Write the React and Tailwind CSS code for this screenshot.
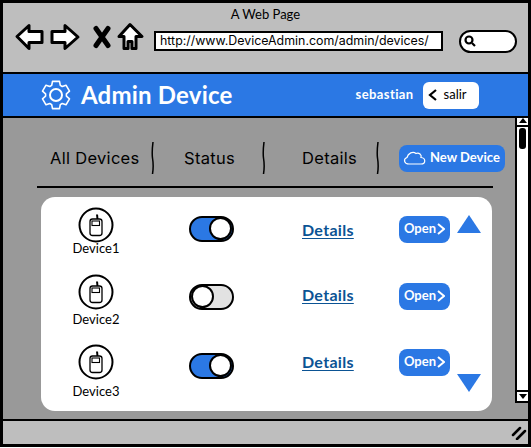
import React from "react";

const gearPath = (() => {
  const cx = 15, cy = 15, teeth = 6;
  let d = "";
  for (let i = 0; i < teeth; i++) {
    const a = (i * Math.PI * 2) / teeth - Math.PI / 2;
    const pts = [
      [10.5, -0.42],
      [14, -0.25],
      [14, 0.25],
      [10.5, 0.42],
    ];
    pts.forEach(([r, o]) => {
      const x = cx + r * Math.cos(a + o);
      const y = cy + r * Math.sin(a + o);
      d += (d ? "L" : "M") + x.toFixed(1) + " " + y.toFixed(1);
    });
  }
  return d + "Z";
})();

const Gear = () => (
  <svg width="30" height="30" viewBox="0 0 30 30" fill="none" stroke="white" strokeWidth="1.6" strokeLinejoin="round">
    <path d={gearPath} />
    <circle cx="15" cy="15" r="6" strokeWidth="2" />
  </svg>
);

const NavIcons = () => (
  <svg width="130" height="30" viewBox="0 3.500 130 30" fill="white" stroke="black" strokeWidth="3" strokeLinejoin="round" className="shrink-0 overflow-visible">
    <path d="M2 14 L14 3 L14 9 L27 9 L27 20 L14 20 L14 26 Z" />
    <path d="M37 9 L50 9 L50 3 L63 14.500 L50 26 L50 20 L37 20 Z" />
    <path d="M81 6 L93 23 M93 6 L81 23" strokeWidth="5" strokeLinecap="round" />
    <path d="M104 14 L115 2 L127 14 L121 14 L121 26 L117 26 L117 19 L113 19 L113 26 L109 26 L109 14 Z" />
  </svg>
);

const Phone = () => (
  <svg width="36" height="36" viewBox="0 0 36 36" fill="none" stroke="black" className="block">
    <circle cx="18" cy="18" r="16.500" strokeWidth="2" fill="white" />
    <path d="M19.500 12 L19 7.500" strokeWidth="2" />
    <rect x="12" y="12" width="12" height="16.500" rx="2.500" strokeWidth="1.300" />
    <rect x="14" y="14" width="7.500" height="4.500" strokeWidth="1.100" />
  </svg>
);

const Toggle = ({ on }) => (
  <div className={`flex h-[26px] w-[45px] items-center rounded-full border-[2.500px] border-black ${on ? "justify-end bg-[#2b78e4]" : "justify-start bg-[#e2e2e2]"}`}>
    <div className="h-[23px] w-[23px] rounded-full border-2 border-black bg-white" />
  </div>
);

const Divider = () => (
  <svg width="4" height="32" viewBox="0 0 4 32" fill="none" stroke="black" strokeWidth="1.500" className="shrink-0">
    <path d="M2 0 C1 8 1 12 1.500 16 C2.500 22 2.500 26 1.500 32" />
  </svg>
);

const rows = [
  { name: "Device1", on: true, top: "mt-[-1px]", labelGap: "mt-[-2px]", toggle: "mt-[8px]", link: "mt-[13px]", open: "mt-[8px]", height: "h-[66px]" },
  { name: "Device2", on: false, top: "mt-[0px]", labelGap: "mt-[2px]", toggle: "mt-[10px]", link: "mt-[12px]", open: "mt-[9px]", height: "h-[70px]" },
  { name: "Device3", on: true, top: "mt-[0px]", labelGap: "mt-[4px]", toggle: "mt-[9px]", link: "mt-[9px]", open: "mt-[5px]", height: "h-[66px]" },
];

export default function App() {
  return (
    <div className="h-[448px] w-[531px] overflow-hidden bg-white font-['Lato',sans-serif] text-black">
      <div className="flex h-[447px] w-[531px] flex-col border-[3px] border-black">
        {/* browser chrome */}
        <div className="flex h-[71px] shrink-0 flex-col border-b-2 border-black bg-[#bebebe]">
          <p className="mt-[3px] text-center text-[13px] leading-[16px]">A Web Page</p>
          <div className="mt-[4px] flex items-center pl-[12px]">
            <NavIcons />
            <div className="ml-[9px] flex h-[20px] w-[289px] items-center border-[2.500px] border-black bg-white pl-[4px] font-['Inter',sans-serif] text-[12.400px]">
              http://www.DeviceAdmin.com/admin/devices/
            </div>
            <div className="ml-[16px] flex h-[23px] w-[58px] items-center rounded-full border-[2.500px] border-black bg-white pl-[3px]">
              <svg width="12" height="12" viewBox="0 0 12 12" fill="none" stroke="black" strokeWidth="2.200">
                <circle cx="5" cy="5" r="3.500" />
                <path d="M8 8 L11 11" />
              </svg>
            </div>
          </div>
        </div>

        {/* app header */}
        <div className="flex h-[44px] shrink-0 items-center border-b-2 border-black bg-[#2b78e4] pl-[38px] text-white">
          <Gear />
          <h1 className="ml-[10px] text-[24px] font-bold tracking-[0.2px]">Admin Device</h1>
          <span className="ml-[123px] text-[13px] font-bold tracking-[0.4px]">sebastian</span>
          <button className="ml-[9px] flex h-[27px] w-[56px] items-center rounded-[6px] bg-white pl-[5px] text-[13px] text-black">
            <svg width="10" height="12" viewBox="0 0 10 12" fill="none" stroke="black" strokeWidth="2.200">
              <path d="M8 1 L2 6 L8 11" />
            </svg>
            <span className="ml-[6px]">salir</span>
          </button>
        </div>

        {/* content + scrollbar */}
        <div className="flex min-h-0 flex-1 bg-[#999999]">
          <div className="flex-1 pt-[23px]">
            <div className="ml-[47px] flex h-[34px] items-center font-['Inter',sans-serif] text-[16.500px] tracking-[0.3px]">
              <span className="w-[101px]">All Devices</span>
              <Divider />
              <span className="ml-[29px] w-[78px]">Status</span>
              <Divider />
              <span className="ml-[36px] w-[74px]">Details</span>
              <Divider />
              <button className="ml-[19px] flex h-[27px] w-[106px] items-center rounded-[8px] bg-[#2b78e4] pl-[4px] font-['Lato',sans-serif] text-[13px] font-bold tracking-normal text-white">
                <svg width="24" height="16" viewBox="0 0 24 16" fill="none" stroke="white" strokeWidth="1.200">
                  <path d="M6 14 C1 14 0 9 4 7.500 C5 3 10 1 13 3.500 C16 2 19 5 18 7.500 C23 8 23 14 18 14 Z" />
                </svg>
                <span className="ml-[3px]">New Device</span>
              </button>
            </div>
            <div className="ml-[34px] mt-[11px] h-[1.500px] w-[456px] bg-black" />
            <div className="ml-[38px] mt-[9px] h-[214px] w-[451px] rounded-[14px] bg-white pt-[11px]">
              {rows.map((row, i) => (
                <div key={row.name} className={`flex items-start ${row.height}`}>
                  <div className={`flex w-[110px] flex-col items-center ${row.top}`}>
                    <Phone />
                    <span className={`text-[13px] leading-[14px] ${row.labelGap}`}>{row.name}</span>
                  </div>
                  <div className={`ml-[38px] w-[113px] ${row.toggle}`}>
                    <Toggle on={row.on} />
                  </div>
                  <a className={`w-[97px] text-[16px] font-bold leading-[18px] tracking-[0.3px] text-[#0b5394] underline underline-offset-2 ${row.link}`}>Details</a>
                  <button className={`flex h-[27px] w-[51px] items-center justify-center rounded-[8px] bg-[#2b78e4] text-[13px] font-bold text-white ${row.open}`}>
                    Open
                    <svg width="8" height="12" viewBox="0 0 8 12" fill="none" stroke="white" strokeWidth="2" className="ml-[1px]">
                      <path d="M1 1 L7 6 L1 11" />
                    </svg>
                  </button>
                  {i === 0 && <div className="ml-[7px] mt-[7px] h-0 w-0 border-x-[12px] border-b-[18px] border-x-transparent border-b-[#2b78e4]" />}
                  {i === 2 && <div className="ml-[7px] mt-[30px] h-0 w-0 border-x-[12px] border-t-[18px] border-x-transparent border-t-[#2b78e4]" />}
                </div>
              ))}
            </div>
          </div>
          <div className="flex h-[285px] w-[13px] shrink-0 flex-col items-center border-b-2 border-l-2 border-black bg-white">
            <div className="h-[9px] w-full border-b-2 border-black bg-white">
              <div className="mx-auto h-0 w-0 border-x-[4px] border-b-[5px] border-x-transparent border-b-black" />
            </div>
            <div className="mt-[1px] h-[21px] w-[7px] rounded-[3px] bg-black" />
            <div className="mt-auto flex h-[11px] w-full items-center justify-center border-t-2 border-black">
              <div className="h-0 w-0 border-x-[4px] border-t-[5px] border-x-transparent border-t-black" />
            </div>
          </div>
        </div>

        {/* status bar */}
        <div className="flex h-[25px] shrink-0 items-center justify-end border-t-2 border-black bg-[#bebebe] pr-[1px]">
          <svg width="16" height="14" viewBox="0 0 16 14" fill="none" stroke="black" strokeWidth="2.500" strokeLinecap="round">
            <path d="M2 9 L9 2 M6 13 L14 5" />
          </svg>
        </div>
      </div>
    </div>
  );
}
